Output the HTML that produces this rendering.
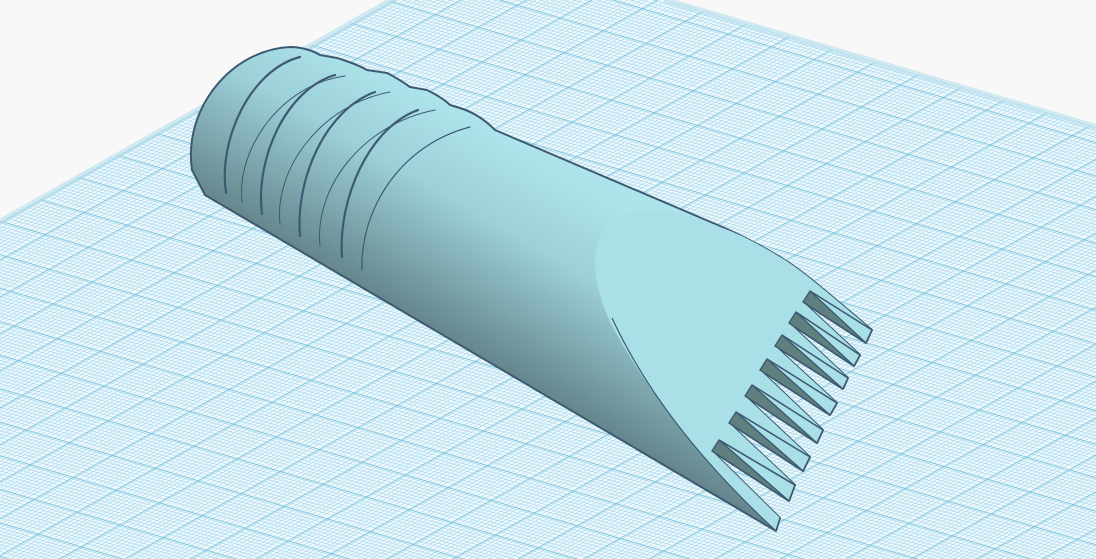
<!DOCTYPE html>
<html><head><meta charset="utf-8"><style>html,body{margin:0;padding:0;background:#f8f8f8;overflow:hidden}svg{display:block}</style></head>
<body>
<svg width="1096" height="559" viewBox="0 0 1096 559" xmlns="http://www.w3.org/2000/svg">
<defs>
<pattern id="g" width="10" height="10" patternUnits="userSpaceOnUse" patternTransform="matrix(4.3,1.27,-3.9,2.2,392,0)">
<rect width="10" height="10" fill="#eff8fb"/>
<path d="M0 1H10M0 2H10M0 3H10M0 4H10M0 5H10M0 6H10M0 7H10M0 8H10M0 9H10M1 0V10M2 0V10M3 0V10M4 0V10M5 0V10M6 0V10M7 0V10M8 0V10M9 0V10" stroke="#9ad4ea" stroke-width="0.16" fill="none"/>
<path d="M0 0.5H10M0.5 0V10" stroke="#62b9d9" stroke-width="0.22" fill="none"/>
</pattern>
<linearGradient id="body" gradientUnits="userSpaceOnUse" x1="495" y1="130" x2="393" y2="305">
<stop offset="0" stop-color="#ade4ec"/><stop offset="0.4" stop-color="#9dd0d8"/><stop offset="1" stop-color="#65868c"/>
</linearGradient>
</defs>
<polygon points="392,0 665,0 1096,127 1096,559 0,559 0,222" fill="url(#g)"/>
<path d="M392,0 L0,222" stroke="#b7e0ee" stroke-width="6" opacity="0.6"/>
<path d="M665,0 L1096,127" stroke="#b7e0ee" stroke-width="6" opacity="0.6"/>
<path d="M205,195 L192,170 C183,110 230,50 290,47 C300,47 312,50 320,55 L337,58 C350,62 360,66 367,70 L387,73 C395,77 403,82 410,87 L427,90 C437,95 445,100 450,105 L460,108 C475,113 485,120 495,130 L713,223 C740,234 760,245 780,257 C800,269 815,282 872,330 L866,343 L803,302 L860,355 L854,366 L789,323 L848,378 L843,389 L775,346 L837,403 L830,415 L760,370 L823,430 L817,443 L745,396 L810,457 L803,471 L729,423 L795,485 L789,501 L712,451 L780,518 L776,531 Z" fill="url(#body)" stroke="#3d5a72" stroke-width="2" stroke-linejoin="round"/>
<path d="M720,227 C690,214 665,208 640,210 C610,214 596,232 595,262 C596,290 605,315 620,340 C660,410 720,480 776,531 L780,518 L712,451 L789,501 L795,485 L729,423 L803,471 L810,457 L745,396 L817,443 L823,430 L760,370 L830,415 L837,403 L775,346 L843,389 L848,378 L789,323 L854,366 L860,355 L803,302 L866,343 L872,330 C815,282 800,269 780,257 C760,245 740,234 720,227 Z" fill="#a9dfe7"/>
<path d="M612,318 C650,400 710,470 776,531" stroke="#3d5a72" stroke-width="1.2" fill="none"/>
<g fill="none" stroke="#3d5a72" stroke-linecap="round">
<path d="M226,193 C218,140 250,70 300,57" stroke-width="2.2"/>
<path d="M262,214 C255,160 285,90 335,75" stroke-width="2.2"/>
<path d="M300,236 C295,180 325,110 375,92" stroke-width="2.2"/>
<path d="M342,257 C338,200 368,128 418,110" stroke-width="2.2"/>
<path d="M242,202 C236,150 280,85 345,76" stroke-width="1"/>
<path d="M280,224 C274,170 320,105 390,92" stroke-width="1"/>
<path d="M320,246 C314,190 360,125 435,110" stroke-width="1"/>
<path d="M362,270 C360,210 400,145 470,127" stroke-width="1.2"/>
</g>
<g fill="#608080" stroke="#3d5a72" stroke-width="1.4" stroke-linejoin="round">
<polygon points="803,302 810,291 866,343"/>
<polygon points="789,323 796,312 854,366"/>
<polygon points="775,346 782,335 843,389"/>
<polygon points="760,370 767,359 830,415"/>
<polygon points="745,396 752,385 817,443"/>
<polygon points="729,423 736,412 803,471"/>
<polygon points="712,451 719,440 789,501"/>
</g>
<g fill="none" stroke="#3d5a72" stroke-width="1.6" stroke-linejoin="round">
<path d="M810,291 L872,330 L866,343"/>
<path d="M796,312 L860,355 L854,366"/>
<path d="M782,335 L848,378 L843,389"/>
<path d="M767,359 L837,403 L830,415"/>
<path d="M752,385 L823,430 L817,443"/>
<path d="M736,412 L810,457 L803,471"/>
<path d="M719,440 L795,485 L789,501"/>
<path d="M776,531 L780,518"/>
</g>
</svg>
</body></html>
